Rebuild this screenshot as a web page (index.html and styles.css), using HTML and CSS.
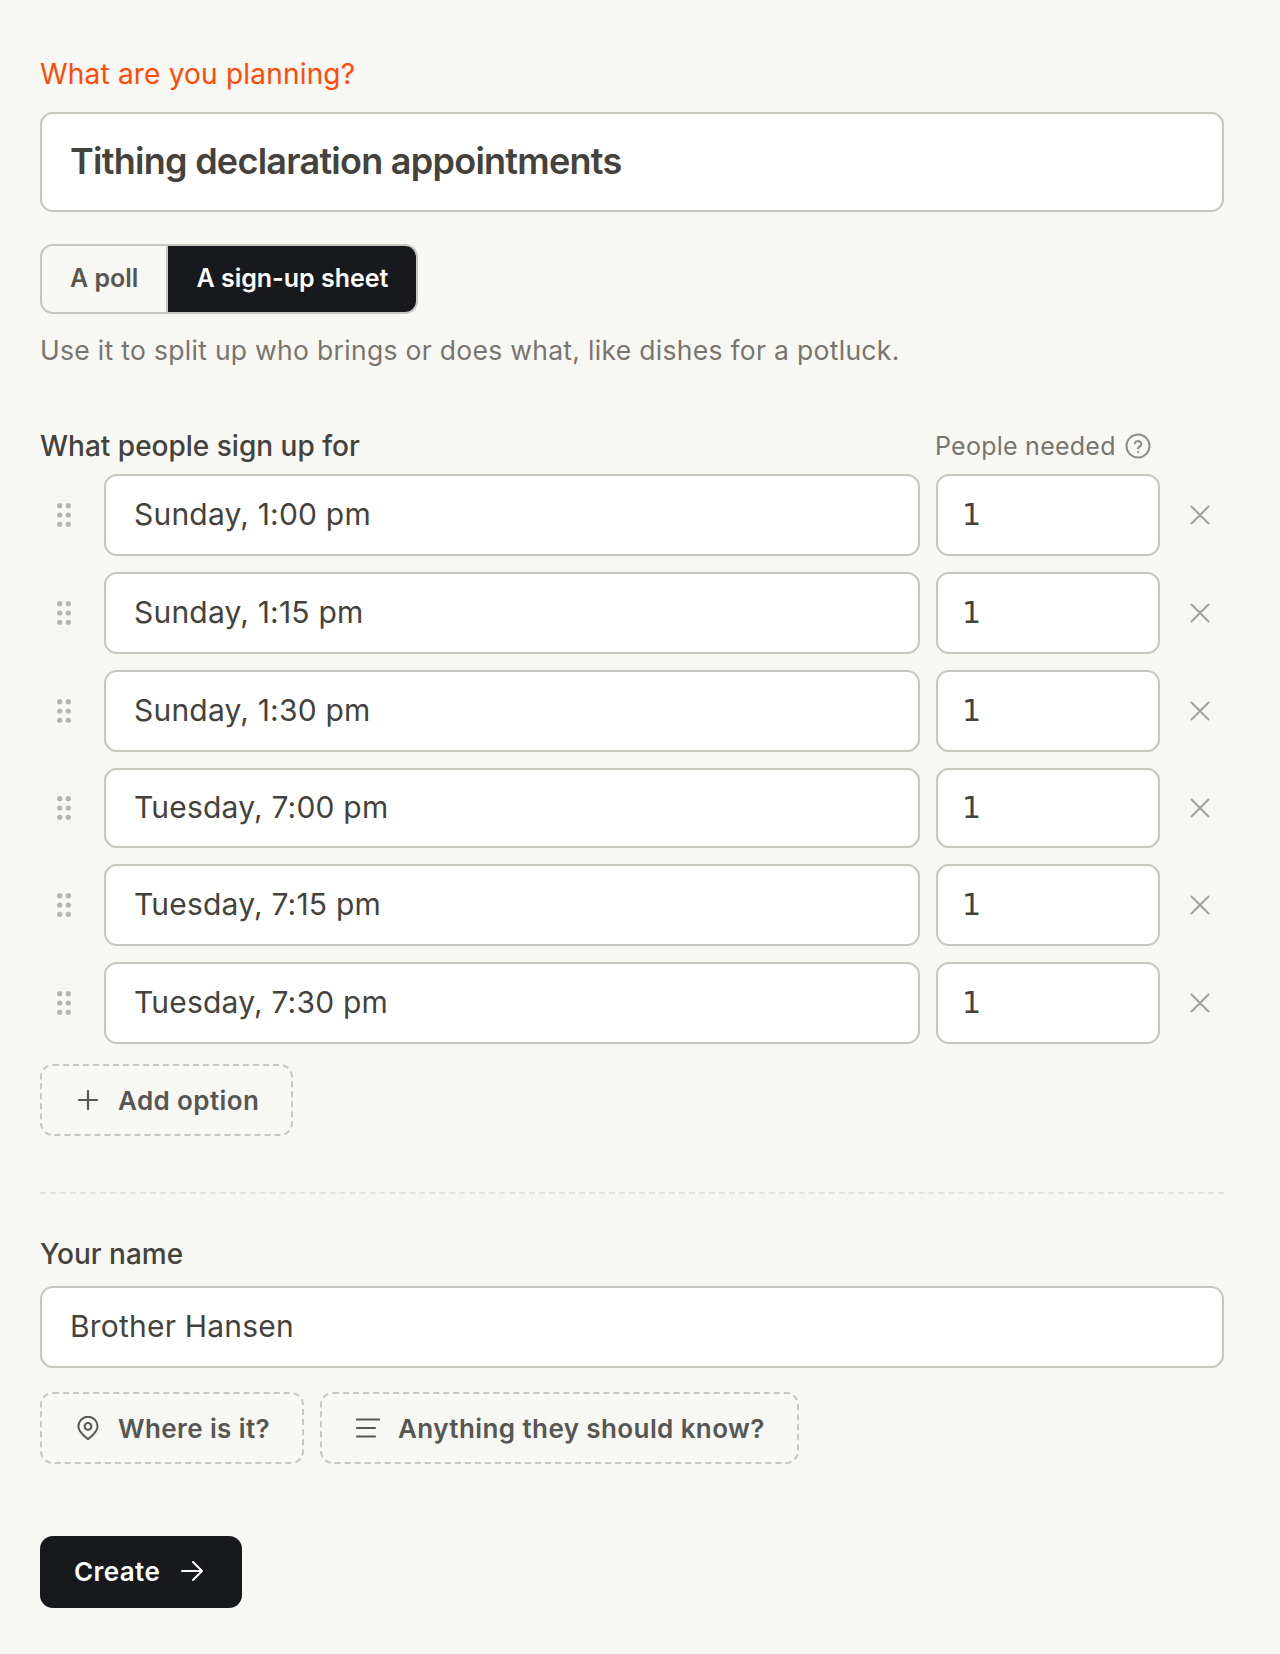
FILE: index.html
```html
<!DOCTYPE html>
<html lang="en">
<head>
    <meta charset="UTF-8">
    <title>Create</title>
    <link rel="stylesheet" href="styles.css">
</head>
<body>
    <svg class="sprite" aria-hidden="true">
        <symbol id="grip" viewBox="0 0 14 24"><circle cx="2.7" cy="2.7" r="2.6"/><circle cx="11.3" cy="2.7" r="2.6"/><circle cx="2.7" cy="12" r="2.6"/><circle cx="11.3" cy="12" r="2.6"/><circle cx="2.7" cy="21.3" r="2.6"/><circle cx="11.3" cy="21.3" r="2.6"/></symbol>
        <symbol id="cross" viewBox="0 0 20 20"><path d="M1.5 1.5l17 17M18.5 1.5l-17 17"/></symbol>
    </svg>

    <form class="plan-form">
        <label class="plan-label">What are you planning?</label>
        <div class="field title-field">Tithing declaration appointments</div>

        <div class="toggle">
            <div class="toggle-item">A poll</div>
            <div class="toggle-item active">A sign-up sheet</div>
        </div>
        <p class="help">Use it to split up who brings or does what, like dishes for a potluck.</p>

        <div class="options-head">
            <div class="field-label">What people sign up for</div>
            <div class="needed">
                People needed
                <svg class="help-icon" viewBox="0 0 26 26" fill="none" stroke="currentColor" stroke-width="2" stroke-linecap="round">
                    <circle cx="13" cy="13" r="11.5"/>
                    <path d="M9.8 10.2a3.3 3.3 0 0 1 6.4 1c0 2.2-3.2 2.6-3.2 4.4"/>
                    <path d="M13 19h.01"/>
                </svg>
            </div>
        </div>

        <div class="option-row">
            <svg class="grip"><use href="#grip"/></svg>
            <div class="field option-field">Sunday, 1:00 pm</div>
            <div class="field count-field">1</div>
            <svg class="remove"><use href="#cross"/></svg>
        </div>
        <div class="option-row">
            <svg class="grip"><use href="#grip"/></svg>
            <div class="field option-field">Sunday, 1:15 pm</div>
            <div class="field count-field">1</div>
            <svg class="remove"><use href="#cross"/></svg>
        </div>
        <div class="option-row">
            <svg class="grip"><use href="#grip"/></svg>
            <div class="field option-field">Sunday, 1:30 pm</div>
            <div class="field count-field">1</div>
            <svg class="remove"><use href="#cross"/></svg>
        </div>
        <div class="option-row short">
            <svg class="grip"><use href="#grip"/></svg>
            <div class="field option-field">Tuesday, 7:00 pm</div>
            <div class="field count-field">1</div>
            <svg class="remove"><use href="#cross"/></svg>
        </div>
        <div class="option-row">
            <svg class="grip"><use href="#grip"/></svg>
            <div class="field option-field">Tuesday, 7:15 pm</div>
            <div class="field count-field">1</div>
            <svg class="remove"><use href="#cross"/></svg>
        </div>
        <div class="option-row">
            <svg class="grip"><use href="#grip"/></svg>
            <div class="field option-field">Tuesday, 7:30 pm</div>
            <div class="field count-field">1</div>
            <svg class="remove"><use href="#cross"/></svg>
        </div>

        <div class="dashed-btn add-btn">
            <svg class="btn-icon" viewBox="0 0 24 24" fill="none" stroke="currentColor" stroke-width="2.2" stroke-linecap="round"><path d="M12 3v18M3 12h18"/></svg>
            Add option
        </div>

        <hr class="divider">

        <div class="field-label name-label">Your name</div>
        <div class="field name-field">Brother Hansen</div>

        <div class="extras">
            <div class="dashed-btn">
                <svg class="btn-icon" viewBox="0 0 24 24" fill="none" stroke="currentColor" stroke-width="2" stroke-linecap="round" stroke-linejoin="round"><path d="M12 23.2C9 20.6 2.4 16 2.4 10.4a9.6 9.6 0 0 1 19.2 0C21.6 16 15 20.6 12 23.2z"/><circle cx="12" cy="10.4" r="3.4"/></svg>
                Where is it?
            </div>
            <div class="dashed-btn">
                <svg class="btn-icon" viewBox="0 0 24 24" fill="none" stroke="currentColor" stroke-width="2.2" stroke-linecap="round"><path d="M1 3.5h22M1 12h18M1 20.5h18"/></svg>
                Anything they should know?
            </div>
        </div>

        <div class="create-btn">
            Create
            <svg class="arrow" viewBox="0 0 24 24" fill="none" stroke="currentColor" stroke-width="2" stroke-linecap="round" stroke-linejoin="round"><path d="M2 12h20M13 3l9 9-9 9"/></svg>
        </div>
    </form>
</body>
</html>
```

FILE: styles.css
```css
* {
    margin: 0;
    padding: 0;
    box-sizing: border-box;
}

body {
    background: #f7f7f3;
    color: #44423d;
    font-family: Inter, "Liberation Sans", sans-serif;
}

.sprite {
    display: none;
}

.plan-form {
    padding: 56px 56px 0 40px;
}

.plan-label {
    display: block;
    color: #ff4a05;
    font-size: 28px;
    letter-spacing: 0.2px;
    line-height: 36px;
    margin-bottom: 20px;
}

.field {
    display: flex;
    align-items: center;
    padding-bottom: 3px;
    background: #fff;
    border: 2px solid #c7c7c0;
    border-radius: 13px;
    font-size: 30px;
    letter-spacing: 0.2px;
}

.title-field {
    height: 100px;
    padding-left: 28px;
    padding-bottom: 2px;
    font-size: 36px;
    font-weight: 600;
    letter-spacing: -0.74px;
}

.toggle {
    display: inline-flex;
    height: 70px;
    margin-top: 32px;
    border: 2px solid #c7c7c0;
    border-radius: 13px;
    overflow: hidden;
    font-size: 25px;
    font-weight: 600;
    color: #57564f;
}

.toggle-item {
    display: flex;
    align-items: center;
    padding: 0 28px 3px;
    border-right: 2px solid #c7c7c0;
}

.toggle-item.active {
    background: #17191c;
    color: #fff;
    border-right: 0;
}

.help {
    color: #78756f;
    font-size: 26.5px;
    letter-spacing: 0.3px;
    line-height: 36px;
    margin-top: 18px;
}

.options-head {
    display: flex;
    align-items: flex-end;
    justify-content: space-between;
    margin-top: 60px;
    padding-right: 73px;
}

.field-label {
    font-size: 28px;
    font-weight: 500;
    line-height: 36px;
}

.needed {
    display: flex;
    align-items: center;
    gap: 9px;
    width: 216px;
    color: #78756f;
    font-size: 25px;
    letter-spacing: 0.25px;
    line-height: 36px;
}

.help-icon {
    width: 26px;
    height: 26px;
    color: #8e8c86;
}

.option-row {
    display: flex;
    align-items: center;
    gap: 16px;
    margin-top: 16px;
}

.options-head + .option-row {
    margin-top: 10px;
}

.grip {
    flex: none;
    width: 14px;
    height: 24px;
    margin: 0 17px;
    fill: #b5b4ae;
}

.option-field,
.count-field {
    height: 82px;
}

.short .field {
    height: 80px;
}

.option-field {
    flex: 1;
    padding-left: 28px;
}

.count-field {
    width: 224px;
    padding-left: 24px;
    padding-bottom: 2px;
    font-family: "DejaVu Sans", sans-serif;
}

.remove {
    flex: none;
    width: 20px;
    height: 20px;
    margin: 0 14px;
    fill: none;
    stroke: #a3a29c;
    stroke-width: 2;
    stroke-linecap: round;
}

.dashed-btn {
    display: inline-flex;
    align-items: center;
    gap: 18px;
    height: 72px;
    padding: 0 32px 0 34px;
    border: 2px dashed #c7c7c0;
    border-radius: 13px;
    color: #565654;
    font-size: 26px;
    font-weight: 600;
    letter-spacing: 0.4px;
}

.add-btn {
    margin-top: 20px;
}

.btn-icon {
    width: 24px;
    height: 24px;
}

.divider {
    border: 0;
    border-top: 2px dashed #e4e4de;
    margin-top: 56px;
}

.name-label {
    margin-top: 42px;
}

.name-field {
    height: 82px;
    margin-top: 14px;
    padding-left: 28px;
}

.extras {
    display: flex;
    gap: 16px;
    margin-top: 24px;
}

.create-btn {
    display: inline-flex;
    align-items: center;
    gap: 20px;
    height: 72px;
    margin-top: 72px;
    padding: 0 38px 2px 34px;
    background: #17191c;
    border-radius: 13px;
    color: #fff;
    font-size: 26px;
    font-weight: 600;
    letter-spacing: 0.4px;
}

.arrow {
    width: 24px;
    height: 24px;
}
```
